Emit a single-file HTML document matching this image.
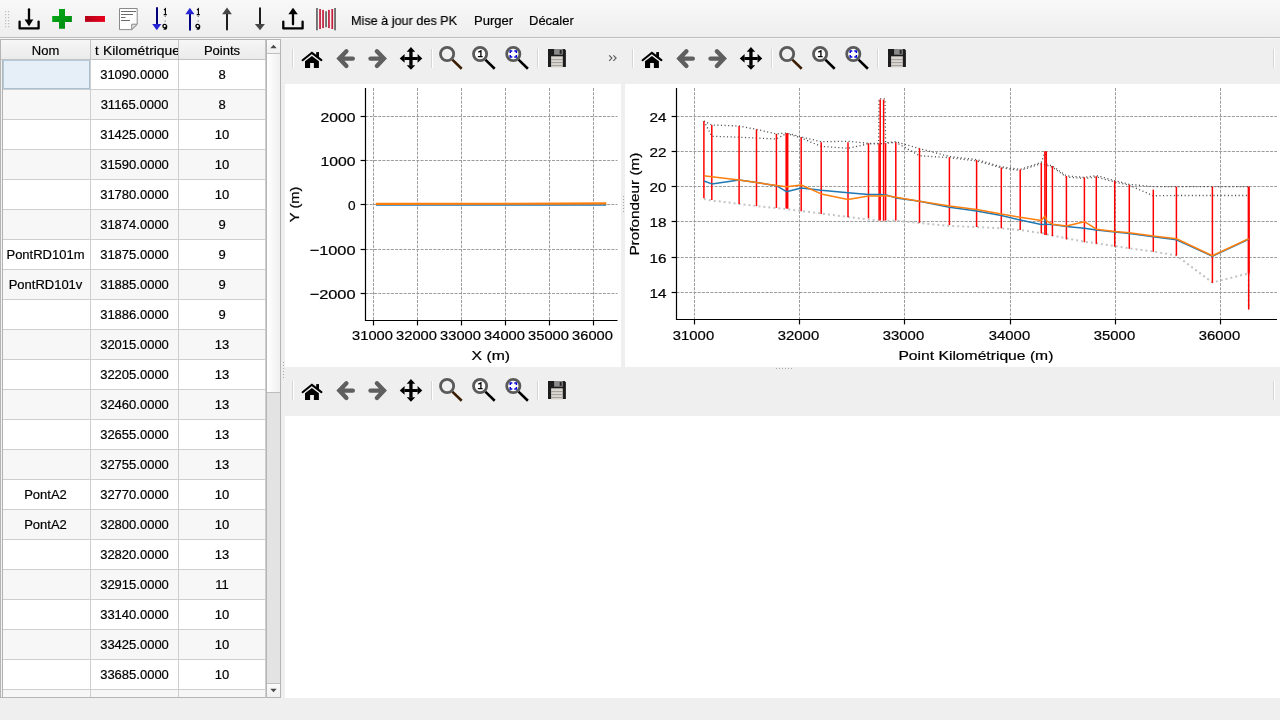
<!DOCTYPE html><html><head><meta charset="utf-8"><style>
*{margin:0;padding:0;box-sizing:border-box}
html,body{width:1280px;height:720px;overflow:hidden;background:#efefef;font-family:"Liberation Sans",sans-serif;font-size:13px;color:#000}
.c,.hd span,.gs{-webkit-text-stroke:0.2px #000}
.a{position:absolute}
.gs{will-change:transform}
#tb{left:0;top:0;width:1280px;height:37px;background:linear-gradient(#f8f8f8,#eeeeee)}
.hd{top:0;height:20px;background:linear-gradient(#f6f6f6,#ebebeb);border-right:1px solid #c3c3c3;border-bottom:1px solid #c3c3c3;overflow:hidden;white-space:nowrap}
.hd span{position:absolute;left:50%;top:3px;line-height:16px;transform:translateX(-50%)}
.c{height:30px;line-height:30px;text-align:center;border-right:1px solid #cecece;border-bottom:1px solid #cecece;white-space:nowrap;overflow:hidden}
svg text{font-family:"Liberation Sans",sans-serif}
svg{will-change:transform}
</style></head><body>

<div id="tb" class="a"></div>
<div class="a" style="left:0;top:37px;width:1280px;height:1px;background:#bdbdbd"></div>
<div class="a" style="left:0;top:38px;width:1280px;height:1px;background:#f7f7f7"></div>
<div class="a gs" style="left:351px;top:13px;line-height:16px;transform:scaleX(0.972);transform-origin:0 0">Mise à jour des PK</div>
<div class="a gs" style="left:474px;top:13px;line-height:16px">Purger</div>
<div class="a gs" style="left:529px;top:13px;line-height:16px">Décaler</div>
<svg class="a" style="left:0;top:0" width="345" height="37"><rect x="5" y="11" width="1.2" height="1.2" fill="#bdbdbd"/><rect x="5" y="14" width="1.2" height="1.2" fill="#bdbdbd"/><rect x="5" y="17" width="1.2" height="1.2" fill="#bdbdbd"/><rect x="5" y="20" width="1.2" height="1.2" fill="#bdbdbd"/><rect x="5" y="23" width="1.2" height="1.2" fill="#bdbdbd"/><rect x="5" y="26" width="1.2" height="1.2" fill="#bdbdbd"/><rect x="8" y="11" width="1.2" height="1.2" fill="#bdbdbd"/><rect x="8" y="14" width="1.2" height="1.2" fill="#bdbdbd"/><rect x="8" y="17" width="1.2" height="1.2" fill="#bdbdbd"/><rect x="8" y="20" width="1.2" height="1.2" fill="#bdbdbd"/><rect x="8" y="23" width="1.2" height="1.2" fill="#bdbdbd"/><rect x="8" y="26" width="1.2" height="1.2" fill="#bdbdbd"/><path d="M29 9.3V20.5" stroke="#000" stroke-width="2.3" stroke-linecap="round"/><path d="M24.6 19.6H33.3L29 26.2Z" fill="#000"/><path d="M19.6 21.6V28.4H38.6V21.6" fill="none" stroke="#000" stroke-width="2.3" stroke-linecap="round" stroke-linejoin="round"/><defs><linearGradient id="gg" x1="0" y1="0" x2="1" y2="1"><stop offset="0" stop-color="#00ad16"/><stop offset="1" stop-color="#008510"/></linearGradient><linearGradient id="rg" x1="0" y1="0" x2="1" y2="0"><stop offset="0" stop-color="#b20018"/><stop offset="1" stop-color="#ea001d"/></linearGradient></defs><path d="M59 9H65V15.9H71.9V22.1H65V28.7H59V22.1H52.2V15.9H59Z" fill="url(#gg)"/><rect x="85" y="16" width="20" height="5.9" fill="url(#rg)"/><path d="M119.5 8.5H137.2V24.2L131.7 29.6H119.5Z" fill="#fff" stroke="#8a8a8a" stroke-width="1"/><path d="M131.7 29.6V24.2H137.2Z" fill="#e0e0e0" stroke="#8a8a8a" stroke-width="1"/><path d="M121 11.5H136M121 14.5H133M121 17.5H125.5M121 20.5H130" stroke="#6a6a6a" stroke-width="1"/><path d="M157 8V25" stroke="#00007a" stroke-width="2" stroke-linecap="round"/><path d="M152.2 23.9H161.3L156.8 30.3Z" fill="#2525d5"/><path d="M164.0 10L165.4 8.8V14.2M163.70000000000002 14.6H166.8" fill="none" stroke="#000" stroke-width="1.1"/><rect x="164.70000000000002" y="15.9" width="1" height="0.9" fill="#333"/><rect x="164.70000000000002" y="20.6" width="1" height="0.9" fill="#333"/><path d="M166.4 26.2A1.75 1.75 0 1 1 166.4 25.9M166.60000000000002 25.4V27.3Q166.5 29.2 164.70000000000002 29.1Q164.0 29.1 163.70000000000002 28.8" fill="none" stroke="#000" stroke-width="1.3"/><path d="M190 14V29.7" stroke="#00007a" stroke-width="2" stroke-linecap="round"/><path d="M185.4 14.3H194.4L189.9 7.8Z" fill="#2525d5"/><path d="M197.0 10L198.4 8.8V14.2M196.70000000000002 14.6H199.8" fill="none" stroke="#000" stroke-width="1.1"/><rect x="197.70000000000002" y="15.9" width="1" height="0.9" fill="#333"/><rect x="197.70000000000002" y="20.6" width="1" height="0.9" fill="#333"/><path d="M199.4 26.2A1.75 1.75 0 1 1 199.4 25.9M199.60000000000002 25.4V27.3Q199.5 29.2 197.70000000000002 29.1Q197.0 29.1 196.70000000000002 28.8" fill="none" stroke="#000" stroke-width="1.3"/><path d="M227 13.5V29.5" stroke="#1e1e1e" stroke-width="2" stroke-linecap="round"/><path d="M222.1 14.3H231.9L227 7.5Z" fill="#474747"/><path d="M260 8.2V24.5" stroke="#1e1e1e" stroke-width="2" stroke-linecap="round"/><path d="M254.9 23.9H264.9L260 30.3Z" fill="#474747"/><path d="M293 14V24.3" stroke="#000" stroke-width="2.3" stroke-linecap="round"/><path d="M288.4 14.2H297.8L293 7.7Z" fill="#000"/><path d="M283.3 21.6V28.4H302.6V21.6" fill="none" stroke="#000" stroke-width="2.3" stroke-linecap="round" stroke-linejoin="round"/><rect x="316.1" y="8" width="1.7" height="22.3" fill="#626262"/><rect x="334.2" y="8" width="1.7" height="22.3" fill="#626262"/><rect x="325.2" y="11.2" width="1.7" height="16" fill="#626262"/><rect x="319.2" y="9" width="1.7" height="20" fill="#c21c3c"/><rect x="322.2" y="9.9" width="1.7" height="18.2" fill="#c21c3c"/><rect x="328.1" y="9.9" width="1.7" height="18.2" fill="#c21c3c"/><rect x="331.4" y="9" width="1.7" height="20" fill="#c21c3c"/></svg>
<div class="a gs" style="left:0;top:39px;width:281px;height:659px;border:1px solid #b5b5b5;background:#fff;overflow:hidden">
<div class="a hd" style="left:0;width:90px"><span>Nom</span></div>
<div class="a hd" style="left:90px;width:88px"><span style="left:4px;transform:none">t</span><span style="left:11.6px;transform:scaleX(1.065);transform-origin:0 0">Kilométrique</span></div>
<div class="a hd" style="left:178px;width:87px"><span>Points</span></div>
<div class="a" style="left:0;top:20px;width:265px;height:30px;background:#fff">
<div class="a c" style="left:0;top:0;width:90px"></div><div class="a" style="left:2px;top:0;width:87px;height:29px;background:#e6eff8;box-shadow:inset 1px 1px 0 #b0cade,inset -1px -1px 0 #a8c0d3"></div>
<div class="a c" style="left:90px;top:0;width:88px">31090.0000</div>
<div class="a c" style="left:178px;top:0;width:87px">8</div>
</div>
<div class="a" style="left:0;top:50px;width:265px;height:30px;background:#f7f7f7">
<div class="a c" style="left:0;top:0;width:90px"></div>
<div class="a c" style="left:90px;top:0;width:88px">31165.0000</div>
<div class="a c" style="left:178px;top:0;width:87px">8</div>
</div>
<div class="a" style="left:0;top:80px;width:265px;height:30px;background:#fff">
<div class="a c" style="left:0;top:0;width:90px"></div>
<div class="a c" style="left:90px;top:0;width:88px">31425.0000</div>
<div class="a c" style="left:178px;top:0;width:87px">10</div>
</div>
<div class="a" style="left:0;top:110px;width:265px;height:30px;background:#f7f7f7">
<div class="a c" style="left:0;top:0;width:90px"></div>
<div class="a c" style="left:90px;top:0;width:88px">31590.0000</div>
<div class="a c" style="left:178px;top:0;width:87px">10</div>
</div>
<div class="a" style="left:0;top:140px;width:265px;height:30px;background:#fff">
<div class="a c" style="left:0;top:0;width:90px"></div>
<div class="a c" style="left:90px;top:0;width:88px">31780.0000</div>
<div class="a c" style="left:178px;top:0;width:87px">10</div>
</div>
<div class="a" style="left:0;top:170px;width:265px;height:30px;background:#f7f7f7">
<div class="a c" style="left:0;top:0;width:90px"></div>
<div class="a c" style="left:90px;top:0;width:88px">31874.0000</div>
<div class="a c" style="left:178px;top:0;width:87px">9</div>
</div>
<div class="a" style="left:0;top:200px;width:265px;height:30px;background:#fff">
<div class="a c" style="left:0;top:0;width:90px">PontRD101m</div>
<div class="a c" style="left:90px;top:0;width:88px">31875.0000</div>
<div class="a c" style="left:178px;top:0;width:87px">9</div>
</div>
<div class="a" style="left:0;top:230px;width:265px;height:30px;background:#f7f7f7">
<div class="a c" style="left:0;top:0;width:90px">PontRD101v</div>
<div class="a c" style="left:90px;top:0;width:88px">31885.0000</div>
<div class="a c" style="left:178px;top:0;width:87px">9</div>
</div>
<div class="a" style="left:0;top:260px;width:265px;height:30px;background:#fff">
<div class="a c" style="left:0;top:0;width:90px"></div>
<div class="a c" style="left:90px;top:0;width:88px">31886.0000</div>
<div class="a c" style="left:178px;top:0;width:87px">9</div>
</div>
<div class="a" style="left:0;top:290px;width:265px;height:30px;background:#f7f7f7">
<div class="a c" style="left:0;top:0;width:90px"></div>
<div class="a c" style="left:90px;top:0;width:88px">32015.0000</div>
<div class="a c" style="left:178px;top:0;width:87px">13</div>
</div>
<div class="a" style="left:0;top:320px;width:265px;height:30px;background:#fff">
<div class="a c" style="left:0;top:0;width:90px"></div>
<div class="a c" style="left:90px;top:0;width:88px">32205.0000</div>
<div class="a c" style="left:178px;top:0;width:87px">13</div>
</div>
<div class="a" style="left:0;top:350px;width:265px;height:30px;background:#f7f7f7">
<div class="a c" style="left:0;top:0;width:90px"></div>
<div class="a c" style="left:90px;top:0;width:88px">32460.0000</div>
<div class="a c" style="left:178px;top:0;width:87px">13</div>
</div>
<div class="a" style="left:0;top:380px;width:265px;height:30px;background:#fff">
<div class="a c" style="left:0;top:0;width:90px"></div>
<div class="a c" style="left:90px;top:0;width:88px">32655.0000</div>
<div class="a c" style="left:178px;top:0;width:87px">13</div>
</div>
<div class="a" style="left:0;top:410px;width:265px;height:30px;background:#f7f7f7">
<div class="a c" style="left:0;top:0;width:90px"></div>
<div class="a c" style="left:90px;top:0;width:88px">32755.0000</div>
<div class="a c" style="left:178px;top:0;width:87px">13</div>
</div>
<div class="a" style="left:0;top:440px;width:265px;height:30px;background:#fff">
<div class="a c" style="left:0;top:0;width:90px">PontA2</div>
<div class="a c" style="left:90px;top:0;width:88px">32770.0000</div>
<div class="a c" style="left:178px;top:0;width:87px">10</div>
</div>
<div class="a" style="left:0;top:470px;width:265px;height:30px;background:#f7f7f7">
<div class="a c" style="left:0;top:0;width:90px">PontA2</div>
<div class="a c" style="left:90px;top:0;width:88px">32800.0000</div>
<div class="a c" style="left:178px;top:0;width:87px">10</div>
</div>
<div class="a" style="left:0;top:500px;width:265px;height:30px;background:#fff">
<div class="a c" style="left:0;top:0;width:90px"></div>
<div class="a c" style="left:90px;top:0;width:88px">32820.0000</div>
<div class="a c" style="left:178px;top:0;width:87px">13</div>
</div>
<div class="a" style="left:0;top:530px;width:265px;height:30px;background:#f7f7f7">
<div class="a c" style="left:0;top:0;width:90px"></div>
<div class="a c" style="left:90px;top:0;width:88px">32915.0000</div>
<div class="a c" style="left:178px;top:0;width:87px">11</div>
</div>
<div class="a" style="left:0;top:560px;width:265px;height:30px;background:#fff">
<div class="a c" style="left:0;top:0;width:90px"></div>
<div class="a c" style="left:90px;top:0;width:88px">33140.0000</div>
<div class="a c" style="left:178px;top:0;width:87px">10</div>
</div>
<div class="a" style="left:0;top:590px;width:265px;height:30px;background:#f7f7f7">
<div class="a c" style="left:0;top:0;width:90px"></div>
<div class="a c" style="left:90px;top:0;width:88px">33425.0000</div>
<div class="a c" style="left:178px;top:0;width:87px">10</div>
</div>
<div class="a" style="left:0;top:620px;width:265px;height:30px;background:#fff">
<div class="a c" style="left:0;top:0;width:90px"></div>
<div class="a c" style="left:90px;top:0;width:88px">33685.0000</div>
<div class="a c" style="left:178px;top:0;width:87px">10</div>
</div>
<div class="a" style="left:0;top:650px;width:265px;height:30px;background:#f7f7f7">
<div class="a c" style="left:0;top:0;width:90px"></div>
<div class="a c" style="left:90px;top:0;width:88px">33900.0000</div>
<div class="a c" style="left:178px;top:0;width:87px">10</div>
</div>
<div class="a" style="left:0;top:20px;width:1px;height:637px;background:#f2f2f2"></div><div class="a" style="left:1px;top:20px;width:1px;height:637px;background:#b3b3b3"></div>
<div class="a" style="left:265px;top:0;width:1px;height:657px;background:#b5b5b5"></div>
<div class="a" style="left:266px;top:0;width:13px;height:657px;background:#e3e3e3"></div>
<div class="a" style="left:266px;top:0;width:13px;height:14px;background:linear-gradient(#fbfbfb,#f0f0f0);border-bottom:1px solid #c0c0c0"></div>
<div class="a" style="left:266px;top:14px;width:13px;height:339px;background:linear-gradient(90deg,#ffffff,#f0f0f0);border-bottom:1px solid #bdbdbd"></div>
<div class="a" style="left:266px;top:643px;width:13px;height:14px;background:linear-gradient(#fbfbfb,#f0f0f0);border-top:1px solid #c0c0c0"></div>
<svg class="a" style="left:266px;top:0" width="13" height="657"><path d="M3.3 8.2H9.7L6.5 4.8Z" fill="#4a4a4a"/><path d="M3.3 648.8H9.7L6.5 652.2Z" fill="#4a4a4a"/></svg>
</div>
<div class="a" style="left:285px;top:84px;width:336px;height:283px;background:#fff"></div>
<div class="a" style="left:625px;top:84px;width:655px;height:283px;background:#fff"></div>
<div class="a" style="left:285px;top:416px;width:995px;height:282px;background:#fff"></div>
<svg class="a" style="left:0;top:0" width="1280" height="720"><g id="mt"><rect x="292" y="49" width="1" height="19" fill="#d6d6d6"/><rect x="293" y="49" width="1" height="19" fill="#ffffff"/><path d="M302.6 60.2L311.9 52.8L321.4 60.2" fill="none" stroke="#000" stroke-width="2.1" stroke-linecap="round" stroke-linejoin="miter"/><rect x="316.2" y="52.1" width="2.8" height="5" fill="#000"/><path d="M305 61.3L311.9 56L318.9 61.3V67.9H313.9V63H310.1V67.9H305Z" fill="#000"/><path d="M346.4 51.3L339.4 58.6L346.4 65.9M340 58.6H352.8" fill="none" stroke="#5f5f5f" stroke-width="4.4" stroke-linecap="round" stroke-linejoin="miter"/><path d="M376.9 51.3L383.9 58.6L376.9 65.9M383.3 58.6H370.5" fill="none" stroke="#5f5f5f" stroke-width="4.4" stroke-linecap="round" stroke-linejoin="miter"/><path d="M409.3 51H412.6V56.9H417.8V60.1H412.6V65.4H409.3V60.1H404.4V56.9H409.3Z" fill="#000"/><path d="M410.95 47L406.7 51.8H415.2ZM410.95 69.7L406.7 65.2H415.2ZM399.7 58.5L404.6 54.1V62.8ZM422.3 58.5L417.6 54.1V62.8Z" fill="#000"/><rect x="431" y="49" width="1" height="19" fill="#d6d6d6"/><rect x="432" y="49" width="1" height="19" fill="#ffffff"/><path d="M452.3 59.6L461.70000000000005 68.7" stroke="#3a1c02" stroke-width="2.6"/><circle cx="447.1" cy="54" r="6.6" fill="#f0f0f0" stroke="#5a5a5a" stroke-width="2.8"/><path d="M485.3 59.6L494.70000000000005 68.7" stroke="#000" stroke-width="2.6"/><circle cx="480.1" cy="54" r="6.6" fill="#fdfdfd" stroke="#5a5a5a" stroke-width="2.8"/><path d="M478.3 52.2L480.9 50.9V56.4M477.9 56.6H482.6" fill="none" stroke="#000" stroke-width="1.3"/><path d="M518.5 59.6L527.9 68.7" stroke="#000" stroke-width="2.6"/><circle cx="513.3" cy="54" r="6.6" fill="#fdfdfd" stroke="#5a5a5a" stroke-width="2.8"/><path d="M510.2 53V50.9H512.3M514.3 50.9H516.4V53M516.4 55V57.1H514.3M512.3 57.1H510.2V55" fill="none" stroke="#0000d8" stroke-width="1.5"/><rect x="537" y="49" width="1" height="19" fill="#d6d6d6"/><rect x="538" y="49" width="1" height="19" fill="#ffffff"/><path d="M548 49H564.6L565.9 50.3V67H548Z" fill="#1c1c1c"/><rect x="554.1" y="49" width="8.7" height="5.7" fill="#8a8a8a"/><rect x="559.7" y="50" width="1.9" height="3.8" fill="#222"/><rect x="551.1" y="56.3" width="11.7" height="11.2" fill="#d9d5d1"/><path d="M551.1 59.6H562.8M551.1 62.6H562.8M551.1 65.6H562.8" stroke="#9a9692" stroke-width="0.9"/></g><path d="M609.2 55.4L611.9 58.1L609.2 60.8M613.4 55.4L616.1 58.1L613.4 60.8" fill="none" stroke="#555" stroke-width="1.1"/><g transform="translate(340,0)"><rect x="292" y="49" width="1" height="19" fill="#d6d6d6"/><rect x="293" y="49" width="1" height="19" fill="#ffffff"/><path d="M302.6 60.2L311.9 52.8L321.4 60.2" fill="none" stroke="#000" stroke-width="2.1" stroke-linecap="round" stroke-linejoin="miter"/><rect x="316.2" y="52.1" width="2.8" height="5" fill="#000"/><path d="M305 61.3L311.9 56L318.9 61.3V67.9H313.9V63H310.1V67.9H305Z" fill="#000"/><path d="M346.4 51.3L339.4 58.6L346.4 65.9M340 58.6H352.8" fill="none" stroke="#5f5f5f" stroke-width="4.4" stroke-linecap="round" stroke-linejoin="miter"/><path d="M376.9 51.3L383.9 58.6L376.9 65.9M383.3 58.6H370.5" fill="none" stroke="#5f5f5f" stroke-width="4.4" stroke-linecap="round" stroke-linejoin="miter"/><path d="M409.3 51H412.6V56.9H417.8V60.1H412.6V65.4H409.3V60.1H404.4V56.9H409.3Z" fill="#000"/><path d="M410.95 47L406.7 51.8H415.2ZM410.95 69.7L406.7 65.2H415.2ZM399.7 58.5L404.6 54.1V62.8ZM422.3 58.5L417.6 54.1V62.8Z" fill="#000"/><rect x="431" y="49" width="1" height="19" fill="#d6d6d6"/><rect x="432" y="49" width="1" height="19" fill="#ffffff"/><path d="M452.3 59.6L461.70000000000005 68.7" stroke="#3a1c02" stroke-width="2.6"/><circle cx="447.1" cy="54" r="6.6" fill="#f0f0f0" stroke="#5a5a5a" stroke-width="2.8"/><path d="M485.3 59.6L494.70000000000005 68.7" stroke="#000" stroke-width="2.6"/><circle cx="480.1" cy="54" r="6.6" fill="#fdfdfd" stroke="#5a5a5a" stroke-width="2.8"/><path d="M478.3 52.2L480.9 50.9V56.4M477.9 56.6H482.6" fill="none" stroke="#000" stroke-width="1.3"/><path d="M518.5 59.6L527.9 68.7" stroke="#000" stroke-width="2.6"/><circle cx="513.3" cy="54" r="6.6" fill="#fdfdfd" stroke="#5a5a5a" stroke-width="2.8"/><path d="M510.2 53V50.9H512.3M514.3 50.9H516.4V53M516.4 55V57.1H514.3M512.3 57.1H510.2V55" fill="none" stroke="#0000d8" stroke-width="1.5"/><rect x="537" y="49" width="1" height="19" fill="#d6d6d6"/><rect x="538" y="49" width="1" height="19" fill="#ffffff"/><path d="M548 49H564.6L565.9 50.3V67H548Z" fill="#1c1c1c"/><rect x="554.1" y="49" width="8.7" height="5.7" fill="#8a8a8a"/><rect x="559.7" y="50" width="1.9" height="3.8" fill="#222"/><rect x="551.1" y="56.3" width="11.7" height="11.2" fill="#d9d5d1"/><path d="M551.1 59.6H562.8M551.1 62.6H562.8M551.1 65.6H562.8" stroke="#9a9692" stroke-width="0.9"/></g><rect x="1273" y="49" width="1" height="19" fill="#d6d6d6"/><rect x="1274" y="49" width="1" height="19" fill="#ffffff"/><g transform="translate(0,332)"><rect x="292" y="49" width="1" height="19" fill="#d6d6d6"/><rect x="293" y="49" width="1" height="19" fill="#ffffff"/><path d="M302.6 60.2L311.9 52.8L321.4 60.2" fill="none" stroke="#000" stroke-width="2.1" stroke-linecap="round" stroke-linejoin="miter"/><rect x="316.2" y="52.1" width="2.8" height="5" fill="#000"/><path d="M305 61.3L311.9 56L318.9 61.3V67.9H313.9V63H310.1V67.9H305Z" fill="#000"/><path d="M346.4 51.3L339.4 58.6L346.4 65.9M340 58.6H352.8" fill="none" stroke="#5f5f5f" stroke-width="4.4" stroke-linecap="round" stroke-linejoin="miter"/><path d="M376.9 51.3L383.9 58.6L376.9 65.9M383.3 58.6H370.5" fill="none" stroke="#5f5f5f" stroke-width="4.4" stroke-linecap="round" stroke-linejoin="miter"/><path d="M409.3 51H412.6V56.9H417.8V60.1H412.6V65.4H409.3V60.1H404.4V56.9H409.3Z" fill="#000"/><path d="M410.95 47L406.7 51.8H415.2ZM410.95 69.7L406.7 65.2H415.2ZM399.7 58.5L404.6 54.1V62.8ZM422.3 58.5L417.6 54.1V62.8Z" fill="#000"/><rect x="431" y="49" width="1" height="19" fill="#d6d6d6"/><rect x="432" y="49" width="1" height="19" fill="#ffffff"/><path d="M452.3 59.6L461.70000000000005 68.7" stroke="#3a1c02" stroke-width="2.6"/><circle cx="447.1" cy="54" r="6.6" fill="#f0f0f0" stroke="#5a5a5a" stroke-width="2.8"/><path d="M485.3 59.6L494.70000000000005 68.7" stroke="#000" stroke-width="2.6"/><circle cx="480.1" cy="54" r="6.6" fill="#fdfdfd" stroke="#5a5a5a" stroke-width="2.8"/><path d="M478.3 52.2L480.9 50.9V56.4M477.9 56.6H482.6" fill="none" stroke="#000" stroke-width="1.3"/><path d="M518.5 59.6L527.9 68.7" stroke="#000" stroke-width="2.6"/><circle cx="513.3" cy="54" r="6.6" fill="#fdfdfd" stroke="#5a5a5a" stroke-width="2.8"/><path d="M510.2 53V50.9H512.3M514.3 50.9H516.4V53M516.4 55V57.1H514.3M512.3 57.1H510.2V55" fill="none" stroke="#0000d8" stroke-width="1.5"/><rect x="537" y="49" width="1" height="19" fill="#d6d6d6"/><rect x="538" y="49" width="1" height="19" fill="#ffffff"/><path d="M548 49H564.6L565.9 50.3V67H548Z" fill="#1c1c1c"/><rect x="554.1" y="49" width="8.7" height="5.7" fill="#8a8a8a"/><rect x="559.7" y="50" width="1.9" height="3.8" fill="#222"/><rect x="551.1" y="56.3" width="11.7" height="11.2" fill="#d9d5d1"/><path d="M551.1 59.6H562.8M551.1 62.6H562.8M551.1 65.6H562.8" stroke="#9a9692" stroke-width="0.9"/><rect x="1273" y="49" width="1" height="19" fill="#d6d6d6"/><rect x="1274" y="49" width="1" height="19" fill="#ffffff"/></g><rect x="283" y="362" width="1" height="1" fill="#a8a8a8"/><rect x="776" y="368" width="1" height="1" fill="#a8a8a8"/><rect x="623" y="196" width="1" height="1" fill="#a8a8a8"/><rect x="283" y="365" width="1" height="1" fill="#a8a8a8"/><rect x="779" y="368" width="1" height="1" fill="#a8a8a8"/><rect x="623" y="199" width="1" height="1" fill="#a8a8a8"/><rect x="283" y="368" width="1" height="1" fill="#a8a8a8"/><rect x="782" y="368" width="1" height="1" fill="#a8a8a8"/><rect x="623" y="202" width="1" height="1" fill="#a8a8a8"/><rect x="283" y="371" width="1" height="1" fill="#a8a8a8"/><rect x="785" y="368" width="1" height="1" fill="#a8a8a8"/><rect x="623" y="205" width="1" height="1" fill="#a8a8a8"/><rect x="283" y="374" width="1" height="1" fill="#a8a8a8"/><rect x="788" y="368" width="1" height="1" fill="#a8a8a8"/><rect x="623" y="208" width="1" height="1" fill="#a8a8a8"/><rect x="283" y="377" width="1" height="1" fill="#a8a8a8"/><rect x="791" y="368" width="1" height="1" fill="#a8a8a8"/><rect x="623" y="211" width="1" height="1" fill="#a8a8a8"/></svg>
<svg class="a" style="left:0;top:0" width="1280" height="720"><line x1="373.5" y1="88" x2="373.5" y2="320.5" stroke="#9c9c9c" stroke-width="1" stroke-dasharray="2.96,1.28"/><line x1="417.5" y1="88" x2="417.5" y2="320.5" stroke="#9c9c9c" stroke-width="1" stroke-dasharray="2.96,1.28"/><line x1="461.5" y1="88" x2="461.5" y2="320.5" stroke="#9c9c9c" stroke-width="1" stroke-dasharray="2.96,1.28"/><line x1="505.5" y1="88" x2="505.5" y2="320.5" stroke="#9c9c9c" stroke-width="1" stroke-dasharray="2.96,1.28"/><line x1="549.5" y1="88" x2="549.5" y2="320.5" stroke="#9c9c9c" stroke-width="1" stroke-dasharray="2.96,1.28"/><line x1="593.5" y1="88" x2="593.5" y2="320.5" stroke="#9c9c9c" stroke-width="1" stroke-dasharray="2.96,1.28"/><line x1="365.5" y1="116.5" x2="617.5" y2="116.5" stroke="#9c9c9c" stroke-width="1" stroke-dasharray="2.96,1.28"/><line x1="365.5" y1="160.5" x2="617.5" y2="160.5" stroke="#9c9c9c" stroke-width="1" stroke-dasharray="2.96,1.28"/><line x1="365.5" y1="204.5" x2="617.5" y2="204.5" stroke="#9c9c9c" stroke-width="1" stroke-dasharray="2.96,1.28"/><line x1="365.5" y1="249.5" x2="617.5" y2="249.5" stroke="#9c9c9c" stroke-width="1" stroke-dasharray="2.96,1.28"/><line x1="365.5" y1="293.5" x2="617.5" y2="293.5" stroke="#9c9c9c" stroke-width="1" stroke-dasharray="2.96,1.28"/><path d="M376 205H606.2" stroke="#1f77b4" stroke-width="1.5"/><path d="M375.8 203.9L560 203.7L606.4 203.3" stroke="#ff7f0e" stroke-width="2.2" fill="none"/><path d="M365.5 88V320.5H617.5" fill="none" stroke="#000" stroke-width="1.2"/><line x1="373.5" y1="320.5" x2="373.5" y2="325.4" stroke="#000" stroke-width="1.2"/><text x="372.5" y="339.7" font-size="13.7" text-anchor="middle" textLength="40.8" lengthAdjust="spacingAndGlyphs" stroke="#000" stroke-width="0.22">31000</text><line x1="417.5" y1="320.5" x2="417.5" y2="325.4" stroke="#000" stroke-width="1.2"/><text x="416.5" y="339.7" font-size="13.7" text-anchor="middle" textLength="40.8" lengthAdjust="spacingAndGlyphs" stroke="#000" stroke-width="0.22">32000</text><line x1="461.5" y1="320.5" x2="461.5" y2="325.4" stroke="#000" stroke-width="1.2"/><text x="460.5" y="339.7" font-size="13.7" text-anchor="middle" textLength="40.8" lengthAdjust="spacingAndGlyphs" stroke="#000" stroke-width="0.22">33000</text><line x1="505.5" y1="320.5" x2="505.5" y2="325.4" stroke="#000" stroke-width="1.2"/><text x="504.5" y="339.7" font-size="13.7" text-anchor="middle" textLength="40.8" lengthAdjust="spacingAndGlyphs" stroke="#000" stroke-width="0.22">34000</text><line x1="549.5" y1="320.5" x2="549.5" y2="325.4" stroke="#000" stroke-width="1.2"/><text x="548.5" y="339.7" font-size="13.7" text-anchor="middle" textLength="40.8" lengthAdjust="spacingAndGlyphs" stroke="#000" stroke-width="0.22">35000</text><line x1="593.5" y1="320.5" x2="593.5" y2="325.4" stroke="#000" stroke-width="1.2"/><text x="592.5" y="339.7" font-size="13.7" text-anchor="middle" textLength="40.8" lengthAdjust="spacingAndGlyphs" stroke="#000" stroke-width="0.22">36000</text><line x1="360.6" y1="116.5" x2="365.5" y2="116.5" stroke="#000" stroke-width="1.2"/><text x="355.6" y="121.7" font-size="13.7" text-anchor="end" textLength="35" lengthAdjust="spacingAndGlyphs" stroke="#000" stroke-width="0.22">2000</text><line x1="360.6" y1="160.5" x2="365.5" y2="160.5" stroke="#000" stroke-width="1.2"/><text x="355.6" y="165.7" font-size="13.7" text-anchor="end" textLength="35" lengthAdjust="spacingAndGlyphs" stroke="#000" stroke-width="0.22">1000</text><line x1="360.6" y1="204.5" x2="365.5" y2="204.5" stroke="#000" stroke-width="1.2"/><text x="355.6" y="209.7" font-size="13.7" text-anchor="end" textLength="7.6" lengthAdjust="spacingAndGlyphs" stroke="#000" stroke-width="0.22">0</text><line x1="360.6" y1="249.5" x2="365.5" y2="249.5" stroke="#000" stroke-width="1.2"/><text x="355.6" y="254.7" font-size="13.7" text-anchor="end" textLength="46" lengthAdjust="spacingAndGlyphs" stroke="#000" stroke-width="0.22">−1000</text><line x1="360.6" y1="293.5" x2="365.5" y2="293.5" stroke="#000" stroke-width="1.2"/><text x="355.6" y="298.7" font-size="13.7" text-anchor="end" textLength="46" lengthAdjust="spacingAndGlyphs" stroke="#000" stroke-width="0.22">−2000</text><text x="490.8" y="359.8" font-size="13.7" text-anchor="middle" textLength="38.5" lengthAdjust="spacingAndGlyphs" stroke="#000" stroke-width="0.22">X (m)</text><g transform="translate(298.8,204.4) rotate(-90)"><text x="0" y="0" font-size="13.7" text-anchor="middle" textLength="35.5" lengthAdjust="spacingAndGlyphs" stroke="#000" stroke-width="0.22">Y (m)</text></g><line x1="694.50" y1="88" x2="694.50" y2="319.5" stroke="#9c9c9c" stroke-width="1" stroke-dasharray="2.96,1.28"/><line x1="799.50" y1="88" x2="799.50" y2="319.5" stroke="#9c9c9c" stroke-width="1" stroke-dasharray="2.96,1.28"/><line x1="904.50" y1="88" x2="904.50" y2="319.5" stroke="#9c9c9c" stroke-width="1" stroke-dasharray="2.96,1.28"/><line x1="1010.50" y1="88" x2="1010.50" y2="319.5" stroke="#9c9c9c" stroke-width="1" stroke-dasharray="2.96,1.28"/><line x1="1115.50" y1="88" x2="1115.50" y2="319.5" stroke="#9c9c9c" stroke-width="1" stroke-dasharray="2.96,1.28"/><line x1="1220.50" y1="88" x2="1220.50" y2="319.5" stroke="#9c9c9c" stroke-width="1" stroke-dasharray="2.96,1.28"/><line x1="676.5" y1="116.50" x2="1277" y2="116.50" stroke="#9c9c9c" stroke-width="1" stroke-dasharray="2.96,1.28"/><line x1="676.5" y1="151.50" x2="1277" y2="151.50" stroke="#9c9c9c" stroke-width="1" stroke-dasharray="2.96,1.28"/><line x1="676.5" y1="186.50" x2="1277" y2="186.50" stroke="#9c9c9c" stroke-width="1" stroke-dasharray="2.96,1.28"/><line x1="676.5" y1="221.50" x2="1277" y2="221.50" stroke="#9c9c9c" stroke-width="1" stroke-dasharray="2.96,1.28"/><line x1="676.5" y1="257.50" x2="1277" y2="257.50" stroke="#9c9c9c" stroke-width="1" stroke-dasharray="2.96,1.28"/><line x1="676.5" y1="292.50" x2="1277" y2="292.50" stroke="#9c9c9c" stroke-width="1" stroke-dasharray="2.96,1.28"/><path d="M703.9 199.0 L711.8 200.5 L739.1 203.9 L756.5 206.0 L776.4 208.0 L786.5 209.0 L801.2 211.0 L821.2 213.5 L848.0 217.0 L868.5 219.5 L880.0 221.0 L896.0 220.5 L919.5 223.0 L949.5 226.0 L976.7 227.0 L1001.3 228.3 L1020.2 230.0 L1041.3 233.0 L1052.4 235.5 L1066.4 238.3 L1084.4 241.7 L1096.4 243.3 L1114.7 246.1 L1129.3 248.3 L1153.3 251.5 L1176.4 255.5 L1212.4 282.5 L1248.7 273.3 L1248.7 309.0" fill="none" stroke="#c4c4c4" stroke-width="2" stroke-dasharray="2,3"/><path d="M703.9 121.0 L711.8 125.0 L739.1 126.0 L756.5 129.4 L776.4 133.9 L786.5 133.0 L801.2 137.0 L821.2 141.7 L848.0 141.3 L868.5 143.3 L878.6 143.3 L879.0 99.0 L882.0 98.6 L885.0 99.0 L885.6 142.8 L896.0 141.7 L919.5 148.6 L949.5 156.5 L976.7 159.6 L1001.3 166.8 L1020.2 169.4 L1041.3 162.4 L1045.4 151.3 L1046.0 164.0 L1052.4 166.0 L1066.4 175.8 L1084.4 177.4 L1096.4 175.6 L1114.7 180.6 L1129.3 184.3 L1153.3 186.7 L1176.4 186.7 L1212.4 186.7 L1248.7 186.7" fill="none" stroke="#505050" stroke-width="1.3" stroke-dasharray="1.1,2.5"/><path d="M703.9 121.0 L711.8 136.3 L739.1 137.2 L776.4 139.0 L786.5 133.4 L801.2 138.0 L821.2 146.4 L848.0 148.3 L868.5 143.8 L879.0 143.8 L880.6 143.6 L883.8 143.6 L886.0 143.2 L896.0 142.4 L919.5 155.7 L949.5 157.7 L976.7 161.0 L1001.3 167.8 L1020.2 170.4 L1041.3 163.6 L1045.6 165.0 L1052.4 167.2 L1066.4 177.0 L1084.4 178.5 L1096.4 177.0 L1114.7 182.0 L1129.3 185.2 L1153.3 195.8 L1176.4 195.5 L1212.4 195.5 L1248.7 195.5" fill="none" stroke="#505050" stroke-width="1.3" stroke-dasharray="1.1,2.5"/><line x1="703.9" y1="121.2" x2="703.9" y2="198.3" stroke="#ff0000" stroke-width="1.5"/><line x1="711.8" y1="125" x2="711.8" y2="200.1" stroke="#ff0000" stroke-width="1.5"/><line x1="739.1" y1="126.1" x2="739.1" y2="203.9" stroke="#ff0000" stroke-width="1.5"/><line x1="756.5" y1="129.4" x2="756.5" y2="206.1" stroke="#ff0000" stroke-width="1.5"/><line x1="776.4" y1="133.9" x2="776.4" y2="207.9" stroke="#ff0000" stroke-width="1.5"/><line x1="786.3" y1="133.4" x2="786.3" y2="208.3" stroke="#ff0000" stroke-width="1.5"/><line x1="786.5" y1="133.4" x2="786.5" y2="208.3" stroke="#ff0000" stroke-width="1.5"/><line x1="787.4" y1="133.4" x2="787.4" y2="208.5" stroke="#ff0000" stroke-width="1.5"/><line x1="787.6" y1="133.4" x2="787.6" y2="208.5" stroke="#ff0000" stroke-width="1.5"/><line x1="801.2" y1="137.2" x2="801.2" y2="211.2" stroke="#ff0000" stroke-width="1.5"/><line x1="821.2" y1="142.3" x2="821.2" y2="213.9" stroke="#ff0000" stroke-width="1.5"/><line x1="848.0" y1="142.3" x2="848.0" y2="217.2" stroke="#ff0000" stroke-width="1.5"/><line x1="868.5" y1="143.2" x2="868.5" y2="218.3" stroke="#ff0000" stroke-width="1.5"/><line x1="879.1" y1="143.4" x2="879.1" y2="220.2" stroke="#ff0000" stroke-width="1.5"/><line x1="880.2" y1="99.6" x2="880.2" y2="220.6" stroke="#ff0000" stroke-width="1.5"/><line x1="883.6" y1="99.6" x2="883.6" y2="220.6" stroke="#ff0000" stroke-width="1.5"/><line x1="885.6" y1="143.2" x2="885.6" y2="220.5" stroke="#ff0000" stroke-width="1.5"/><line x1="895.8" y1="142.4" x2="895.8" y2="220.6" stroke="#ff0000" stroke-width="1.5"/><line x1="919.5" y1="148.3" x2="919.5" y2="222.8" stroke="#ff0000" stroke-width="1.5"/><line x1="949.4" y1="157.2" x2="949.4" y2="225" stroke="#ff0000" stroke-width="1.5"/><line x1="976.6" y1="160.1" x2="976.6" y2="227" stroke="#ff0000" stroke-width="1.5"/><line x1="1001.3" y1="167.4" x2="1001.3" y2="228.3" stroke="#ff0000" stroke-width="1.5"/><line x1="1020.2" y1="169.5" x2="1020.2" y2="229.9" stroke="#ff0000" stroke-width="1.5"/><line x1="1041.3" y1="163.3" x2="1041.3" y2="233.4" stroke="#ff0000" stroke-width="1.5"/><line x1="1044.9" y1="151.3" x2="1044.9" y2="235" stroke="#ff0000" stroke-width="1.5"/><line x1="1046.3" y1="151.3" x2="1046.3" y2="235" stroke="#ff0000" stroke-width="1.5"/><line x1="1052.4" y1="166.1" x2="1052.4" y2="236.1" stroke="#ff0000" stroke-width="1.5"/><line x1="1066.4" y1="176.1" x2="1066.4" y2="239.4" stroke="#ff0000" stroke-width="1.5"/><line x1="1084.4" y1="177.4" x2="1084.4" y2="242.3" stroke="#ff0000" stroke-width="1.5"/><line x1="1096.3" y1="176.3" x2="1096.3" y2="243.9" stroke="#ff0000" stroke-width="1.5"/><line x1="1114.7" y1="180.8" x2="1114.7" y2="246.8" stroke="#ff0000" stroke-width="1.5"/><line x1="1129.3" y1="184.8" x2="1129.3" y2="248.8" stroke="#ff0000" stroke-width="1.5"/><line x1="1153.3" y1="189.6" x2="1153.3" y2="251.8" stroke="#ff0000" stroke-width="1.5"/><line x1="1176.4" y1="186.7" x2="1176.4" y2="255.6" stroke="#ff0000" stroke-width="1.5"/><line x1="1212.4" y1="186.7" x2="1212.4" y2="282.9" stroke="#ff0000" stroke-width="1.5"/><line x1="1248.4" y1="186.7" x2="1248.4" y2="273.5" stroke="#ff0000" stroke-width="1.5"/><line x1="1249.0" y1="186.7" x2="1249.0" y2="273.5" stroke="#ff0000" stroke-width="1.5"/><line x1="1248.7" y1="186.7" x2="1248.7" y2="309.6" stroke="#ff0000" stroke-width="1.5"/><path d="M703.9 181.0 L711.8 183.9 L739.1 180.1 L756.5 182.6 L776.4 185.7 L786.5 191.7 L801.2 187.9 L821.2 190.3 L848.0 192.8 L868.5 194.6 L880.0 194.6 L886.0 195.0 L896.0 197.9 L919.5 201.2 L949.5 207.2 L976.7 211.0 L1001.3 215.6 L1020.2 220.0 L1041.3 224.6 L1044.8 224.3 L1045.0 219.5 L1045.6 224.3 L1052.4 224.4 L1066.4 226.5 L1084.4 228.3 L1096.4 229.9 L1114.7 232.0 L1129.3 233.6 L1153.3 236.8 L1176.4 239.8 L1212.4 256.2 L1248.7 239.2" fill="none" stroke="#1f77b4" stroke-width="1.5" stroke-linejoin="round"/><path d="M703.9 175.7 L711.8 176.8 L739.1 180.1 L756.5 182.6 L776.4 185.4 L786.5 186.8 L801.2 185.0 L821.2 193.9 L848.0 199.4 L868.5 196.1 L880.0 196.1 L886.0 195.4 L896.0 197.2 L919.5 201.2 L949.5 206.1 L976.7 209.4 L1001.3 213.9 L1020.2 217.2 L1041.3 220.6 L1045.0 216.1 L1047.0 221.2 L1052.4 224.2 L1066.4 226.1 L1084.4 221.7 L1096.4 229.2 L1114.7 231.5 L1129.3 232.8 L1153.3 235.9 L1176.4 238.8 L1212.4 255.8 L1248.7 238.8" fill="none" stroke="#ff7f0e" stroke-width="1.5" stroke-linejoin="round"/><path d="M676.5 88V319.5H1277" fill="none" stroke="#000" stroke-width="1.2"/><line x1="694.50" y1="319.5" x2="694.50" y2="324.4" stroke="#000" stroke-width="1.2"/><text x="693.50" y="339.7" font-size="13.7" text-anchor="middle" textLength="41.3" lengthAdjust="spacingAndGlyphs" stroke="#000" stroke-width="0.22">31000</text><line x1="799.50" y1="319.5" x2="799.50" y2="324.4" stroke="#000" stroke-width="1.2"/><text x="798.50" y="339.7" font-size="13.7" text-anchor="middle" textLength="41.3" lengthAdjust="spacingAndGlyphs" stroke="#000" stroke-width="0.22">32000</text><line x1="904.50" y1="319.5" x2="904.50" y2="324.4" stroke="#000" stroke-width="1.2"/><text x="903.50" y="339.7" font-size="13.7" text-anchor="middle" textLength="41.3" lengthAdjust="spacingAndGlyphs" stroke="#000" stroke-width="0.22">33000</text><line x1="1010.50" y1="319.5" x2="1010.50" y2="324.4" stroke="#000" stroke-width="1.2"/><text x="1009.50" y="339.7" font-size="13.7" text-anchor="middle" textLength="41.3" lengthAdjust="spacingAndGlyphs" stroke="#000" stroke-width="0.22">34000</text><line x1="1115.50" y1="319.5" x2="1115.50" y2="324.4" stroke="#000" stroke-width="1.2"/><text x="1114.50" y="339.7" font-size="13.7" text-anchor="middle" textLength="41.3" lengthAdjust="spacingAndGlyphs" stroke="#000" stroke-width="0.22">35000</text><line x1="1220.50" y1="319.5" x2="1220.50" y2="324.4" stroke="#000" stroke-width="1.2"/><text x="1219.50" y="339.7" font-size="13.7" text-anchor="middle" textLength="41.3" lengthAdjust="spacingAndGlyphs" stroke="#000" stroke-width="0.22">36000</text><line x1="671.6" y1="116.50" x2="676.5" y2="116.50" stroke="#000" stroke-width="1.2"/><text x="666.6" y="121.60" font-size="13.7" text-anchor="end" textLength="17" lengthAdjust="spacingAndGlyphs" stroke="#000" stroke-width="0.22">24</text><line x1="671.6" y1="151.50" x2="676.5" y2="151.50" stroke="#000" stroke-width="1.2"/><text x="666.6" y="156.60" font-size="13.7" text-anchor="end" textLength="17" lengthAdjust="spacingAndGlyphs" stroke="#000" stroke-width="0.22">22</text><line x1="671.6" y1="186.50" x2="676.5" y2="186.50" stroke="#000" stroke-width="1.2"/><text x="666.6" y="191.60" font-size="13.7" text-anchor="end" textLength="17" lengthAdjust="spacingAndGlyphs" stroke="#000" stroke-width="0.22">20</text><line x1="671.6" y1="221.50" x2="676.5" y2="221.50" stroke="#000" stroke-width="1.2"/><text x="666.6" y="226.60" font-size="13.7" text-anchor="end" textLength="17" lengthAdjust="spacingAndGlyphs" stroke="#000" stroke-width="0.22">18</text><line x1="671.6" y1="257.50" x2="676.5" y2="257.50" stroke="#000" stroke-width="1.2"/><text x="666.6" y="262.60" font-size="13.7" text-anchor="end" textLength="17" lengthAdjust="spacingAndGlyphs" stroke="#000" stroke-width="0.22">16</text><line x1="671.6" y1="292.50" x2="676.5" y2="292.50" stroke="#000" stroke-width="1.2"/><text x="666.6" y="297.60" font-size="13.7" text-anchor="end" textLength="17" lengthAdjust="spacingAndGlyphs" stroke="#000" stroke-width="0.22">14</text><text x="975.9" y="359.8" font-size="13.7" text-anchor="middle" textLength="155" lengthAdjust="spacingAndGlyphs" stroke="#000" stroke-width="0.22">Point Kilométrique (m)</text><g transform="translate(638.6,204.1) rotate(-90)"><text x="0" y="0" font-size="13.7" text-anchor="middle" textLength="103" lengthAdjust="spacingAndGlyphs" stroke="#000" stroke-width="0.22">Profondeur (m)</text></g></svg>
</body></html>
